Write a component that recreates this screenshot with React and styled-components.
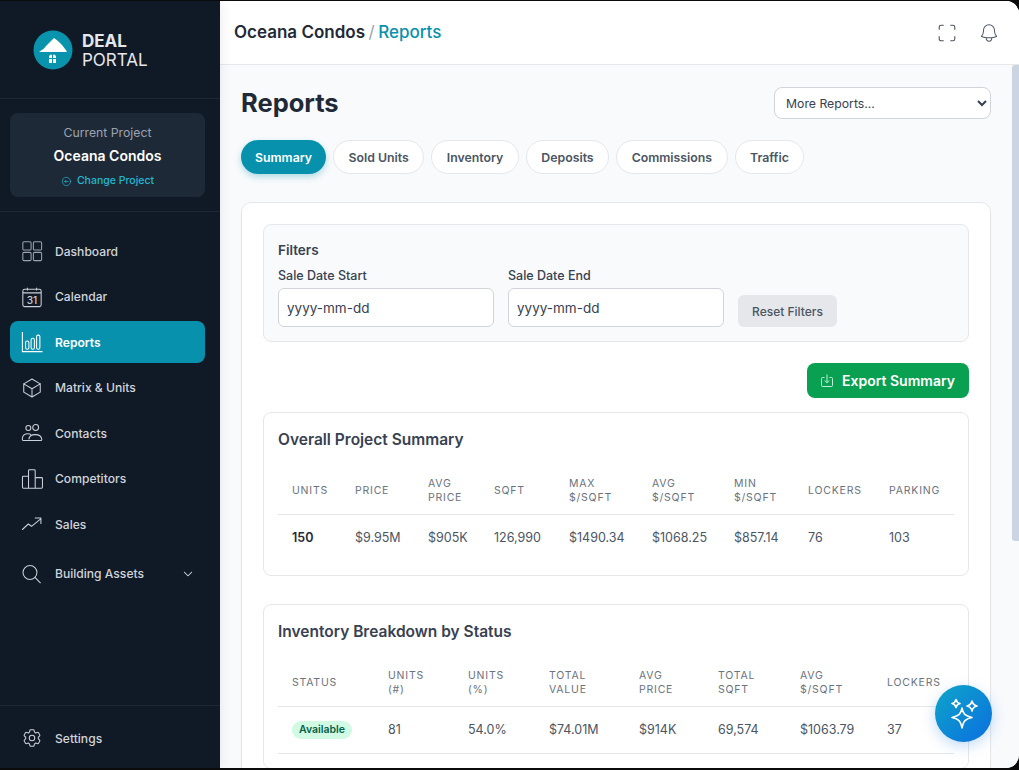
import React from "react";
import styled, { createGlobalStyle } from "styled-components";
import {
  HiOutlineCube, HiOutlineCog6Tooth, HiOutlineBell, HiOutlineArrowLeftCircle, HiChevronDown,
} from "react-icons/hi2";

const Global = createGlobalStyle`
  * { box-sizing: border-box; }
  html, body { margin: 0; height: 770px; overflow: hidden; background: #0b0b0c; font-family: Inter, "Liberation Sans", sans-serif; }
`;

const Shell = styled.div`
  display: flex; width: 1019px; height: 767px; margin-top: 1px; overflow: hidden;
  border-radius: 0 13px 13px 0; background: #f8fafc;
`;
const Sidebar = styled.aside`
  width: 220px; flex: none; display: flex; flex-direction: column; background: #101926; color: #d1d5db;
  box-shadow: 3px 0 10px rgba(15,23,42,.06); position: relative; z-index: 2;
`;
const Brand = styled.div`
  height: 98px; flex: none; padding: 29px 0 0 33px; display: flex; gap: 9px; border-bottom: 1px solid #1e2735;
`;
const BrandText = styled.div`
  font-size: 17px; line-height: 19px; color: #e5e7eb; padding-top: 2px; font-weight: 400;
  strong { display: block; font-weight: 700; }
`;
const ProjectWrap = styled.div`
  height: 113px; flex: none; padding: 14px 15px 14px 10px; border-bottom: 1px solid #1e2735;
`;
const ProjectCard = styled.div`
  height: 84px; border-radius: 8px; background: #1e2937; text-align: center; padding-top: 12px;
`;
const ProjectLabel = styled.div`font-size: 12.25px; line-height: 15px; color: #9ca3af;`;
const ProjectName = styled.div`font-size: 14px; line-height: 20px; font-weight: 600; color: #fff; margin-top: 6px;`;
const ChangeLink = styled.div`
  display: flex; justify-content: center; align-items: center; gap: 5px; font-size: 10.5px; line-height: 14px; font-weight: 500; color: #22b8cf; margin-top: 8px;
`;
const Nav = styled.nav`
  flex: 1; padding: 18px 15px 0 10px; display: flex; flex-direction: column; gap: 3.5px;
`;
const NavItem = styled.div`
  height: ${p => p.$tall ? "50px" : "42px"};
  display: flex; align-items: center; gap: 12px; padding: 0 11px; border-radius: 8px;
  font-size: 12.1px; font-weight: ${p => p.$active ? 600 : 500};
  color: ${p => p.$active ? "#fff" : "#d1d5db"}; background: ${p => p.$active ? "#0891ad" : "transparent"};
  svg.lead { flex: none; width: 22px; height: 22px; stroke-width: 1.15; color: ${p => p.$active ? "#fff" : "#cbd0d8"}; }
`;
const NavLabel = styled.span`flex: 1;`;
const SidebarFoot = styled.div`
  height: 63px; flex: none; padding: 11px 15px 0 10px; border-top: 1px solid #1e2735;
`;
const Main = styled.main`flex: 1; min-width: 0; display: flex; flex-direction: column; background: #f8fafc; position: relative;`;
const TopBar = styled.header`
  height: 64px; flex: none; background: #fff; border-bottom: 1px solid #e5e7eb; display: flex; align-items: center; justify-content: space-between; padding: 0 19px 2px 14px;
`;
const Crumbs = styled.div`font-size: 17px; font-weight: 600; color: #1f2937;`;
const CrumbSep = styled.span`color: #9ca3af; font-weight: 400; margin: 0 3.5px;`;
const CrumbNow = styled.span`color: #0891ad; font-weight: 500;`;
const TopIcons = styled.div`
  display: flex; gap: 20px; align-items: center; color: #4b5563; margin-top: 2px;
  svg { width: 22px; height: 22px; stroke-width: 1.1; }
`;
const Scroller = styled.div`flex: 1; overflow: hidden;`;
const ScrollThumb = styled.div`
  position: absolute; right: 0; top: 64px; width: 7px; height: 476px; background: #cbd5e1; border-radius: 3px 0 0 3px;
`;
const Content = styled.div`
  padding: 22px 28px 40px 21px;
`;
const PageHead = styled.div`display: flex; justify-content: space-between; align-items: center;`;
const PageTitle = styled.h1`margin: 0; font-size: 25.5px; line-height: 32px; font-weight: 700; color: #1f2937;`;
const MoreSelect = styled.select`
  width: 217px; height: 32px; padding: 0 6px 0 7px; border: 1px solid #d1d5db; border-radius: 8px; background: #fff; color: #374151; font: 400 12.25px Inter, sans-serif;
`;
const Tabs = styled.div`display: flex; gap: 7px; margin-top: 21px;`;
const Tab = styled.div`
  height: 34px; padding: 0 ${p => p.$active ? "14px" : "14.5px"}; display: flex; align-items: center; border-radius: 17px; font-size: 12.3px; font-weight: 600;
  border: ${p => p.$active ? "0" : "1px solid #e5e7eb"};
  background: ${p => p.$active ? "#0891ad" : "#fff"}; color: ${p => p.$active ? "#fff" : "#4b5563"};
  box-shadow: ${p => p.$active ? "0 3px 6px rgba(8,145,173,.3)" : "none"};
`;
const Card = styled.section`
  margin-top: 28px; background: #fff; border: 1px solid #e5e7eb; border-radius: 10px; padding: 21px 21px 20px; box-shadow: 0 1px 2px rgba(0,0,0,.03);
`;
const FilterPanel = styled.div`
  height: 118px; border: 1px solid #e5e7eb; border-radius: 8px; background: #f9fafb; padding: 17px 14px;
`;
const FilterTitle = styled.div`font-size: 13.5px; line-height: 17px; font-weight: 600; color: #374151;`;
const FilterRow = styled.div`display: flex; align-items: flex-end; gap: 14px; margin-top: 9px;`;
const Field = styled.label`display: flex; flex-direction: column; gap: 5px; font-size: 12.5px; line-height: 15px; font-weight: 500; color: #374151;`;
const DateInput = styled.input`
  width: 216px; height: 39px; border: 1px solid #d1d5db; border-radius: 6px; background: #fff; padding: 0 8px; font: 400 13.5px Inter, sans-serif; color: #374151;
`;
const ResetButton = styled.button`
  height: 32px; width: 99px; border: 0; border-radius: 6px; background: #e5e7eb; color: #4b5563; font: 500 12px Inter, sans-serif; padding: 0;
`;
const ExportRow = styled.div`display: flex; justify-content: flex-end; margin-top: 21px;`;
const ExportButton = styled.button`
  width: 162px; height: 35px; border: 0; border-radius: 8px; background: #0aa052; color: #fff; font: 600 14px Inter, sans-serif;
  display: flex; align-items: center; justify-content: center; gap: 9px; padding: 0;
`;
const Panel = styled.div`
  margin-top: ${p => p.$mt}px; border: 1px solid #e5e7eb; border-radius: 8px; background: #fff; padding: 17px 14px 14px;
`;
const PanelTitle = styled.h3`margin: 0; font-size: 15.5px; line-height: 20px; font-weight: 600; color: #374151;`;
const Table = styled.table`width: 100%; margin-top: 15px; border-collapse: collapse; table-layout: fixed;`;
const Col = styled.col`width: ${p => p.$w}px;`;
const Th = styled.th`
  padding: 8px 14px 4px; height: 49px; text-align: left; vertical-align: middle; font-size: 10.5px; line-height: 14px; font-weight: 400; letter-spacing: .075em; text-transform: uppercase; color: #6b7280; border-bottom: 1px solid #e5e7eb;
`;
const Td = styled.td`
  padding: 0 14px; height: 47px; font-size: 12.5px; color: #4b5563; font-weight: ${p => p.$strong ? 600 : 400}; ${p => p.$strong ? "color:#1f2937;" : ""}
  border-bottom: ${p => p.$line ? "1px solid #e5e7eb" : "0"};
`;
const Badge = styled.span`
  display: inline-block; padding: 0 7px; height: 18px; line-height: 18px; border-radius: 9px; background: #d1fae5; color: #065f46; font-size: 10.5px; font-weight: 600;
`;
const Fab = styled.button`
  position: absolute; left: 935px; top: 685px; width: 57px; height: 57px; border-radius: 50%; border: 0; padding: 0; z-index: 5;
  background: linear-gradient(135deg, #0ea5c9, #0b6fe0); box-shadow: 0 4px 14px rgba(11,111,224,.25); display: flex; align-items: center; justify-content: center;
`;

const Logo = () => (
  <svg width="40" height="40" viewBox="0 0 40 40">
    <circle cx="20" cy="20" r="19.5" fill="#0a93ad" />
    <path d="M6 22 L11 18.5 L13 16 L21 8 L25 11 L29 15 L34 21.5 L33 22 Z" fill="#fff" />
    <path d="M16 28 a2 3 0 0 1 3 -3 v3 zM20 25 a2 3 0 0 1 3 3 h-3 zM16 29h3v4h-3zM20 29h3v4h-3z" fill="#fff" />
  </svg>
);
const DashboardIcon = () => (
  <svg className="lead" viewBox="0 0 24 24" fill="none" stroke="#9ca3af">
    <rect x="2" y="2" width="9" height="9" rx="1.3" />
    <rect x="13.5" y="2" width="9" height="9" rx="1.3" />
    <rect x="2" y="13.5" width="9" height="9" rx="1.3" />
    <rect x="13.5" y="13.5" width="9" height="9" rx="1.3" />
  </svg>
);
const CalendarIcon = () => (
  <svg className="lead" viewBox="0 0 24 24" fill="none" stroke="currentColor">
    <rect x="2" y="3.5" width="20" height="19" rx="2" />
    <path d="M2 7.5h20M7 2v3M17 2v3" />
    <text x="12" y="19.5" textAnchor="middle" fontSize="11" fontFamily="Inter, sans-serif" fontWeight="500" fill="currentColor" stroke="none">31</text>
  </svg>
);
const ReportsIcon = () => (
  <svg className="lead" viewBox="0 0 24 24" fill="none" stroke="currentColor">
    <path d="M1.5 1v21.5h22" />
    <rect x="5" y="11" width="3.6" height="9" rx="1.6" />
    <rect x="11" y="8" width="3.6" height="12" rx="1.6" />
    <rect x="17" y="4.5" width="3.6" height="15.5" rx="1.6" />
  </svg>
);
const UsersIcon = () => (
  <svg className="lead" viewBox="0 0 24 24" fill="none" stroke="currentColor" strokeLinejoin="round">
    <circle cx="8" cy="6.5" r="2.7" />
    <circle cx="16" cy="6" r="3.2" />
    <path d="M1.5 17.5c.4-3 3-4.7 6-4.7 1.4 0 2.6.3 3.6 1" />
    <path d="M8.5 19c.4-3.4 3.6-5.2 7-5.2s6.8 1.8 7.2 5.2c0 .8-.5 1.2-1.2 1.2H2.8c-.7 0-1.3-.4-1.3-1.2v-1.5" />
  </svg>
);
const CompetitorsIcon = () => (
  <svg className="lead" viewBox="0 0 24 24" fill="none" stroke="currentColor">
    <path d="M8.2 22V9H2.6c-.6 0-1 .4-1 1v11c0 .6.4 1 1 1h19.8c.6 0 1-.4 1-1v-9.5c0-.6-.4-1-1-1H15.5" />
    <path d="M8.2 9V3c0-.6.4-1 1-1h5.3c.6 0 1 .4 1 1v19" />
  </svg>
);
const SalesIcon = () => (
  <svg className="lead" viewBox="0 0 24 24" fill="none" stroke="currentColor" strokeLinecap="round" strokeLinejoin="round">
    <path d="M1.5 18L8 12l3.5 2.5L21.5 6.5M15.5 5.5h6.2v6" />
  </svg>
);
const SearchIcon = () => (
  <svg className="lead" viewBox="0 0 24 24" fill="none" stroke="currentColor" strokeLinecap="round">
    <circle cx="9.8" cy="10.4" r="7.6" />
    <path d="M15.5 16l5.6 5.6" />
  </svg>
);
const FullscreenIcon = () => (
  <svg viewBox="0 0 24 24" fill="none" stroke="currentColor" strokeLinecap="round">
    <path d="M3.5 8V5.5a2 2 0 0 1 2-2H8M16 3.5h2.5a2 2 0 0 1 2 2V8M20.5 16v2.5a2 2 0 0 1-2 2H16M8 20.5H5.5a2 2 0 0 1-2-2V16" strokeWidth="1.2" />
  </svg>
);
const ExportIcon = () => (
  <svg width="12" height="13" viewBox="0 0 12 13" fill="none" stroke="#d1fae5" strokeWidth=".9">
    <path d="M3.5 3.5H1.5a1 1 0 0 0-1 1v7a1 1 0 0 0 1 1h9a1 1 0 0 0 1-1v-7a1 1 0 0 0-1-1H8.5" />
    <path d="M6 .5v8M3.8 6.5L6 8.8l2.2-2.3" />
  </svg>
);
const Sparkles = () => (
  <svg width="34" height="34" viewBox="0 0 34 34" fill="none" stroke="#fff" strokeWidth="1.6" strokeLinejoin="round">
    <path d="M15 11 C16 17 18 19 25 20.5 C18 22 16 24.5 15 31 C14 24.5 12 22 5 20.5 C12 19 14 17 15 11 Z" />
    <path d="M9 2.5 C9.5 5 10.5 6 13 6.5 C10.5 7 9.5 8 9 10.5 C8.5 8 7.5 7 5 6.5 C7.5 6 8.5 5 9 2.5 Z" />
    <path d="M25 4 C25.6 7 26.7 8.2 30 9 C26.7 9.8 25.6 11 25 14 C24.4 11 23.3 9.8 20 9 C23.3 8.2 24.4 7 25 4 Z" />
  </svg>
);

const nav = [
  ["Dashboard", <DashboardIcon />],
  ["Calendar", <CalendarIcon />],
  ["Reports", <ReportsIcon />, true],
  ["Matrix & Units", <HiOutlineCube className="lead" />],
  ["Contacts", <UsersIcon />],
  ["Competitors", <CompetitorsIcon />],
  ["Sales", <SalesIcon />],
];
const tabs = ["Summary", "Sold Units", "Inventory", "Deposits", "Commissions", "Traffic"];
const sumCols = [63, 73, 66, 75, 83, 82, 74, 81, 79];
const sumHead = ["Units", "Price", "Avg Price", "Sqft", "Max $/Sqft", "Avg $/Sqft", "Min $/Sqft", "Lockers", "Parking"];
const sumRow = ["150", "$9.95M", "$905K", "126,990", "$1490.34", "$1068.25", "$857.14", "76", "103"];
const invCols = [96, 80, 81, 90, 79, 82, 87, 81];
const invHead = ["Status", "Units (#)", "Units (%)", "Total Value", "Avg Price", "Total Sqft", "Avg $/Sqft", "Lockers"];
const invRow = ["81", "54.0%", "$74.01M", "$914K", "69,574", "$1063.79", "37"];

export default function App() {
  return (
    <>
      <Global />
      <Shell>
        <Sidebar>
          <Brand>
            <Logo />
            <BrandText><strong>DEAL</strong>PORTAL</BrandText>
          </Brand>
          <ProjectWrap>
            <ProjectCard>
              <ProjectLabel>Current Project</ProjectLabel>
              <ProjectName>Oceana Condos</ProjectName>
              <ChangeLink><HiOutlineArrowLeftCircle size={11} />Change Project</ChangeLink>
            </ProjectCard>
          </ProjectWrap>
          <Nav>
            {nav.map(([label, icon, active]) => (
              <NavItem key={label} $active={active}>{icon}<NavLabel>{label}</NavLabel></NavItem>
            ))}
            <NavItem $tall>
              <SearchIcon />
              <NavLabel>Building Assets</NavLabel>
              <HiChevronDown size={12} />
            </NavItem>
          </Nav>
          <SidebarFoot>
            <NavItem><HiOutlineCog6Tooth className="lead" /><NavLabel>Settings</NavLabel></NavItem>
          </SidebarFoot>
        </Sidebar>
        <Main>
          <TopBar>
            <Crumbs>Oceana Condos<CrumbSep>/</CrumbSep><CrumbNow>Reports</CrumbNow></Crumbs>
            <TopIcons><FullscreenIcon /><HiOutlineBell /></TopIcons>
          </TopBar>
          <Scroller>
            <Content>
              <PageHead>
                <PageTitle>Reports</PageTitle>
                <MoreSelect defaultValue="more"><option value="more">More Reports...</option></MoreSelect>
              </PageHead>
              <Tabs>{tabs.map((t, i) => <Tab key={t} $active={i === 0}>{t}</Tab>)}</Tabs>
              <Card>
                <FilterPanel>
                  <FilterTitle>Filters</FilterTitle>
                  <FilterRow>
                    <Field>Sale Date Start<DateInput readOnly value="yyyy-mm-dd" /></Field>
                    <Field>Sale Date End<DateInput readOnly value="yyyy-mm-dd" /></Field>
                    <ResetButton>Reset Filters</ResetButton>
                  </FilterRow>
                </FilterPanel>
                <ExportRow>
                  <ExportButton><ExportIcon />Export Summary</ExportButton>
                </ExportRow>
                <Panel $mt={14}>
                  <PanelTitle>Overall Project Summary</PanelTitle>
                  <Table>
                    <colgroup>{sumCols.map((w, i) => <Col key={i} $w={w} />)}</colgroup>
                    <thead><tr>{sumHead.map(h => <Th key={h}>{h}</Th>)}</tr></thead>
                    <tbody><tr>{sumRow.map((c, i) => <Td key={i} $strong={i === 0}>{c}</Td>)}</tr></tbody>
                  </Table>
                </Panel>
                <Panel $mt={28}>
                  <PanelTitle>Inventory Breakdown by Status</PanelTitle>
                  <Table>
                    <colgroup>{invCols.map((w, i) => <Col key={i} $w={w} />)}</colgroup>
                    <thead><tr>{invHead.map(h => <Th key={h}>{h}</Th>)}</tr></thead>
                    <tbody><tr>
                      <Td $line><Badge>Available</Badge></Td>
                      {invRow.map((c, i) => <Td key={i} $line>{c}</Td>)}
                    </tr></tbody>
                  </Table>
                </Panel>
              </Card>
            </Content>
          </Scroller>
          <ScrollThumb />
        </Main>
        <Fab aria-label="Assistant"><Sparkles /></Fab>
      </Shell>
    </>
  );
}
